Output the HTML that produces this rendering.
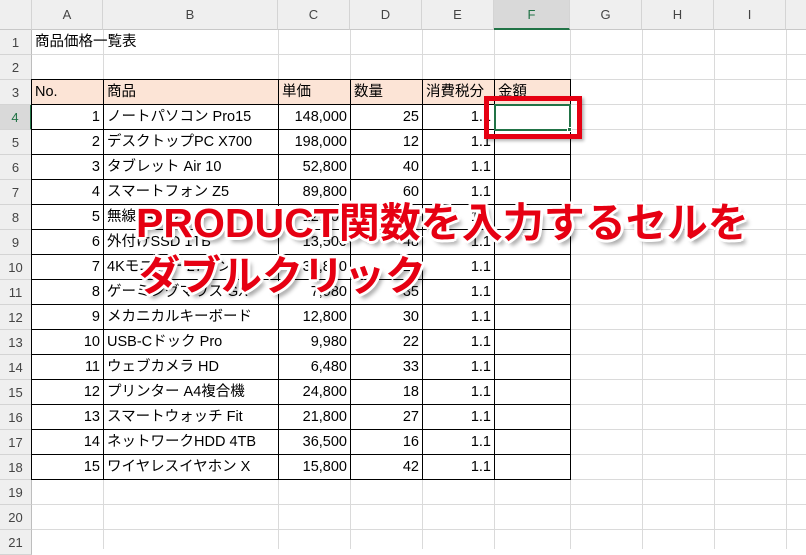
<!DOCTYPE html>
<html><head><meta charset="utf-8"><style>
*{margin:0;padding:0;box-sizing:border-box}
body{width:806px;height:549px;overflow:hidden;background:#fff;position:relative;font-family:"Liberation Sans","Noto Sans CJK JP",sans-serif;font-size:14.5px;color:#000}
.ch{position:absolute;top:0;height:30px;background:#efefef;border-right:1px solid #d4d4d4;border-bottom:1px solid #c8c8c8;text-align:center;line-height:30px;font-size:13px;color:#444}
.rh{position:absolute;left:0;width:32px;height:25px;background:#efefef;border-bottom:1px solid #d4d4d4;border-right:1px solid #bdbdbd;text-align:center;line-height:25px;font-size:13px;color:#444}
.grid{position:absolute;left:32px;top:30px;right:0;bottom:0;
background-image:repeating-linear-gradient(to bottom,transparent 0,transparent 24px,#dadada 24px,#dadada 25px);}
.vl{position:absolute;top:30px;bottom:0;width:1px;background:#dadada}
table{position:absolute;left:31px;top:79px;border-collapse:collapse;table-layout:fixed;background:#fff}
td{height:25px;border:1.5px solid #000;padding:0 3px;white-space:nowrap;overflow:hidden;line-height:22px}
td.r{text-align:right}
tr.h td{background:#fce4d6}
.ov{position:absolute;font-weight:bold;font-size:41px;color:#e60012;letter-spacing:0;
text-shadow:2px 2px 0 #fff,-2px -2px 0 #fff,2px -2px 0 #fff,-2px 2px 0 #fff,3px 0 0 #fff,-3px 0 0 #fff,0 3px 0 #fff,0 -3px 0 #fff,4px 5px 4px rgba(0,0,0,.35);white-space:nowrap}
</style></head><body>
<div class="grid"></div>
<div class="vl" style="left:103px"></div><div class="vl" style="left:278px"></div><div class="vl" style="left:350px"></div><div class="vl" style="left:422px"></div><div class="vl" style="left:494px"></div><div class="vl" style="left:570px"></div><div class="vl" style="left:642px"></div><div class="vl" style="left:714px"></div><div class="vl" style="left:786px"></div>
<div class="ch" style="left:0;width:32px"></div>
<div class="ch" style="left:32px;width:71px">A</div>
<div class="ch" style="left:103px;width:175px">B</div>
<div class="ch" style="left:278px;width:72px">C</div>
<div class="ch" style="left:350px;width:72px">D</div>
<div class="ch" style="left:422px;width:72px">E</div>
<div class="ch" style="left:494px;width:76px;background:#d9d9d9;border-bottom:2px solid #217346;color:#217346">F</div>
<div class="ch" style="left:570px;width:72px">G</div>
<div class="ch" style="left:642px;width:72px">H</div>
<div class="ch" style="left:714px;width:72px">I</div>
<div class="ch" style="left:786px;width:30px"></div>
<div class="rh" style="top:30px">1</div><div class="rh" style="top:55px">2</div><div class="rh" style="top:80px">3</div><div class="rh" style="top:105px;background:#d9d9d9;color:#217346;border-right:2px solid #217346">4</div><div class="rh" style="top:130px">5</div><div class="rh" style="top:155px">6</div><div class="rh" style="top:180px">7</div><div class="rh" style="top:205px">8</div><div class="rh" style="top:230px">9</div><div class="rh" style="top:255px">10</div><div class="rh" style="top:280px">11</div><div class="rh" style="top:305px">12</div><div class="rh" style="top:330px">13</div><div class="rh" style="top:355px">14</div><div class="rh" style="top:380px">15</div><div class="rh" style="top:405px">16</div><div class="rh" style="top:430px">17</div><div class="rh" style="top:455px">18</div><div class="rh" style="top:480px">19</div><div class="rh" style="top:505px">20</div><div class="rh" style="top:530px">21</div>
<div style="position:absolute;left:35px;top:30px;line-height:25px">商品価格一覧表</div>
<table>
<colgroup><col style="width:72px"><col style="width:175px"><col style="width:72px"><col style="width:72px"><col style="width:72px"><col style="width:76px"></colgroup>
<tr class="h"><td>No.</td><td>商品</td><td>単価</td><td>数量</td><td>消費税分</td><td>金額</td></tr>
<tr><td class="r">1</td><td>ノートパソコン Pro15</td><td class="r">148,000</td><td class="r">25</td><td class="r">1.1</td><td></td></tr>
<tr><td class="r">2</td><td>デスクトップPC X700</td><td class="r">198,000</td><td class="r">12</td><td class="r">1.1</td><td></td></tr>
<tr><td class="r">3</td><td>タブレット Air 10</td><td class="r">52,800</td><td class="r">40</td><td class="r">1.1</td><td></td></tr>
<tr><td class="r">4</td><td>スマートフォン Z5</td><td class="r">89,800</td><td class="r">60</td><td class="r">1.1</td><td></td></tr>
<tr><td class="r">5</td><td>無線LANルーター</td><td class="r">12,800</td><td class="r">70</td><td class="r">1.1</td><td></td></tr>
<tr><td class="r">6</td><td>外付けSSD 1TB</td><td class="r">13,500</td><td class="r">48</td><td class="r">1.1</td><td></td></tr>
<tr><td class="r">7</td><td>4Kモニター 27インチ</td><td class="r">39,800</td><td class="r">20</td><td class="r">1.1</td><td></td></tr>
<tr><td class="r">8</td><td>ゲーミングマウス GX</td><td class="r">7,980</td><td class="r">35</td><td class="r">1.1</td><td></td></tr>
<tr><td class="r">9</td><td>メカニカルキーボード</td><td class="r">12,800</td><td class="r">30</td><td class="r">1.1</td><td></td></tr>
<tr><td class="r">10</td><td>USB-Cドック Pro</td><td class="r">9,980</td><td class="r">22</td><td class="r">1.1</td><td></td></tr>
<tr><td class="r">11</td><td>ウェブカメラ HD</td><td class="r">6,480</td><td class="r">33</td><td class="r">1.1</td><td></td></tr>
<tr><td class="r">12</td><td>プリンター A4複合機</td><td class="r">24,800</td><td class="r">18</td><td class="r">1.1</td><td></td></tr>
<tr><td class="r">13</td><td>スマートウォッチ Fit</td><td class="r">21,800</td><td class="r">27</td><td class="r">1.1</td><td></td></tr>
<tr><td class="r">14</td><td>ネットワークHDD 4TB</td><td class="r">36,500</td><td class="r">16</td><td class="r">1.1</td><td></td></tr>
<tr><td class="r">15</td><td>ワイヤレスイヤホン X</td><td class="r">15,800</td><td class="r">42</td><td class="r">1.1</td><td></td></tr>
</table>
<div style="position:absolute;left:494px;top:104px;width:77px;height:27px;border:2px solid #217346"></div>
<div style="position:absolute;left:567px;top:127px;width:5px;height:5px;background:#217346;border:1px solid #fff"></div>
<div style="position:absolute;left:484px;top:96px;width:98px;height:43px;border:5px solid #e60012;box-shadow:2px 2px 3px rgba(0,0,0,.3)"></div>
<div class="ov" style="left:136px;top:189px">PRODUCT関数を入力するセルを</div>
<div class="ov" style="left:139px;top:242px">ダブルクリック</div>
</body></html>
